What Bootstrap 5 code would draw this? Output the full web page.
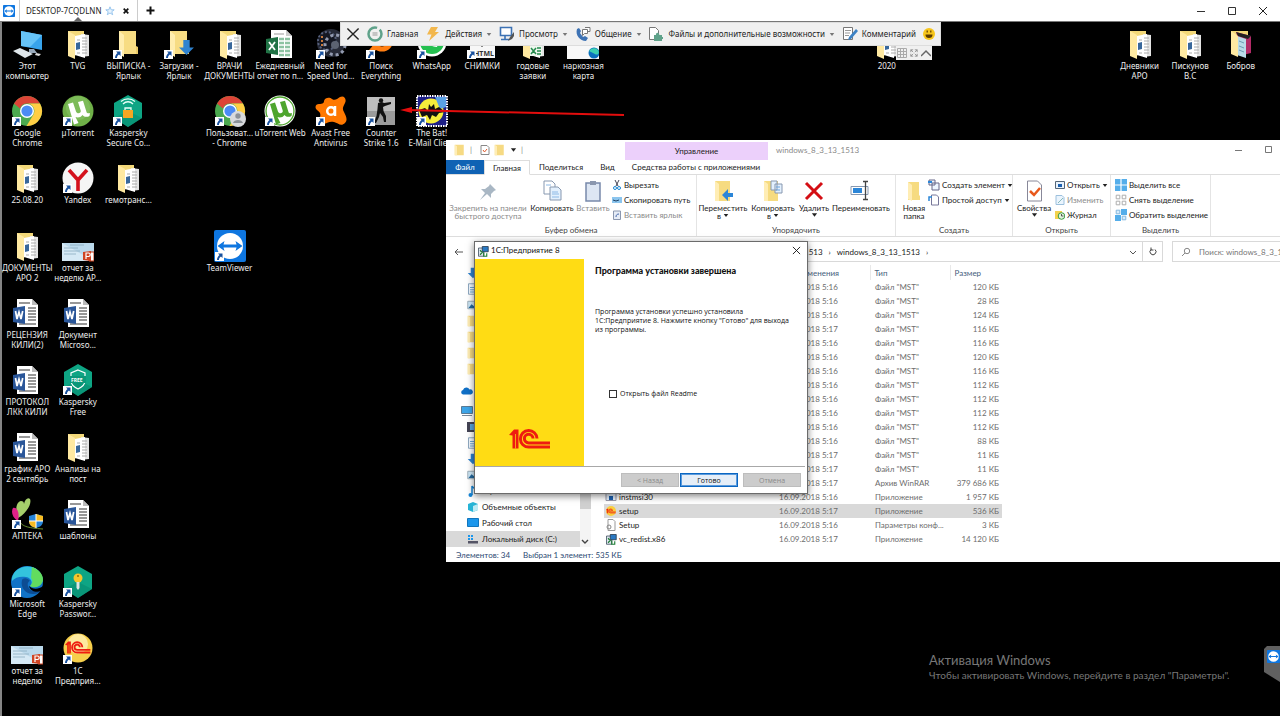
<!DOCTYPE html>
<html lang="ru">
<head>
<meta charset="utf-8">
<meta name="viewport" content="width=device-width, initial-scale=1">
<title>DESKTOP-7CQDLNN</title>
<link rel="stylesheet" href="https://cdn.jsdelivr.net/npm/bootstrap@5.3.0/dist/css/bootstrap.min.css">
<style>
body{font-family:"Noto Sans","Open Sans",sans-serif;font-size:8px;line-height:10px;color:#222;background:#000;overflow:hidden}
button{font:inherit;color:inherit;background:none;border:0;padding:0}
svg{flex:none;display:block}
.i10{width:10px;height:10px}.i12{width:12px;height:12px}.i16{width:16px;height:16px}.i22{width:22px;height:22px}.i32{width:32px;height:32px}
/* session tabs */
.tabs-bar{height:22px;background:#fff;border-bottom:1px solid #777}
.tabs-logo{margin:0 4px 0 3px}
.session-tab{width:119px;border-left:1px solid #ccc;border-right:1px solid #ccc;padding-left:6px}
.tab-pointer{left:73px;top:17px;width:10px;height:5px}
.win-btns{gap:21px;padding-right:12px}
/* desktop */
.desk{background:#000;border-left:2px solid #858585}
.icons{display:grid;grid-template-columns:repeat(25,minmax(0,1fr));grid-template-rows:repeat(10,minmax(0,1fr));padding:0 14px 22px 0}
.ico{display:flex;flex-direction:column;align-items:center;padding-top:6px;color:#eee;text-decoration:none;text-align:center;white-space:nowrap}
.ico span{margin-top:1px}
.c1{grid-column:1}.c2{grid-column:2}.c3{grid-column:3}.c4{grid-column:4}.c5{grid-column:5}.c6{grid-column:6}.c7{grid-column:7}.c8{grid-column:8}.c9{grid-column:9}.c10{grid-column:10}.c11{grid-column:11}.c12{grid-column:12}.c18{grid-column:18}.c23{grid-column:23}.c24{grid-column:24}.c25{grid-column:25}
.r1{grid-row:1}.r2{grid-row:2}.r3{grid-row:3}.r4{grid-row:4}.r5{grid-row:5}.r6{grid-row:6}.r7{grid-row:7}.r8{grid-row:8}.r9{grid-row:9}.r10{grid-row:10}
.tv-bar{left:338px;top:0;height:24px;width:601px;background:#f0f0f0;border:1px solid #ddd;padding:0 5px;white-space:nowrap}
.tv-bar button{display:flex;align-items:center;gap:4px}
.tv-bar .crt{color:#777}
.tv-tail{left:894px;top:24px;height:14px;width:36px;background:#f0f0f0}
.red-arrow{left:396px;top:80px;width:230px;height:18px}
.watermark{left:927px;top:631px;color:#777;font-family:Lato,"Noto Sans",sans-serif;font-size:10px;line-height:15px;white-space:nowrap}
.watermark div{font-size:13px}
.side-grip{right:0;top:624px;width:16px;height:36px}
/* explorer */
.explorer{left:444px;right:0;top:118px;background:#fff;overflow:hidden;white-space:nowrap;font-family:Lato,"Noto Sans",sans-serif}
.ex-title{height:20px}
.quick{width:179px}
.ctx{width:143px;height:18px;background:#ecd0fb;margin-top:2px}
.ex-win-btns{padding-right:6px}
.ex-tabs{height:15px;border-bottom:1px solid #ddd}
.file-tab{width:38px;background:#0f62b4;color:#fff}
.home-tab{width:46px;border:1px solid #ddd;border-bottom-color:#fff;margin-bottom:-1px}
.share-tab{width:62px}.view-tab{width:31px}.tools-tab{width:146px}
.ribbon{height:62px;border-bottom:1px solid #ddd}
.grp{display:flex;flex-direction:column;border-right:1px solid #e4e4e4;padding-top:5px}
.grp-name{height:12px;line-height:12px;text-align:center;color:#444}
.g1{width:251px}.g2{width:199px}.g3{width:117px}.g4{width:98px}.g5{width:100px}
.big{display:flex;flex-direction:column;align-items:center;line-height:8px;flex:none}
.big svg{margin-bottom:2px}
.w84{width:84px}.w44{width:44px}.w38{width:38px}.w48{width:48px}.w34{width:34px}.w60{width:60px}.w28{width:28px}
.smalls{display:flex;flex-direction:column;gap:3px;margin-top:-1px}
.smalls button{display:flex;align-items:center;gap:2px;height:12px}
.dim{color:#8a8a8a!important}
.addr{height:28px;padding:4px 0 3px}
.back{width:10px;margin:0 0 0 8px}
.addr-box{border:1px solid #d9d9d9;width:588px;margin-left:111px}
.crumbs{padding-left:228px}
.crumbs span{margin:0 6px}
.refresh{border-left:1px solid #d9d9d9;width:20px}
.search-box{border:1px solid #d9d9d9;border-right:0;margin-left:9px;padding-left:8px}
.search-box input{border:0;outline:0;font-size:8px;padding:0;background:none;min-width:0}
.search-box input::placeholder{color:#777;opacity:1}
.nav-pane{width:134px}
.nav-pane a{display:flex;align-items:center;gap:3px;height:16px;padding-left:21px;color:#222;text-decoration:none}
.nav-pane a.root{padding-left:15px}
.nav-pane a.od{margin:6px 0 4px}
.nav-pane a.on{background:#d9d9d9}
.pane-scroll{width:11px;background:#f4f4f4}
.pane-scroll i{height:244px;background:#d0d0d0}
.files{margin-left:13px;width:398px;table-layout:fixed;border-collapse:collapse;line-height:14px;color:#6d6d6d}
.files th,.files td{padding:0;overflow:hidden}
.files th{height:15px;font-weight:400;color:#46607d}
.files th+th+th{border-left:1px solid #e8e8e8;padding-left:4px}
.files td+td+td{padding-left:5px}
.files td:last-child{text-align:right;padding-right:3px}
.files td:first-child{color:#222}
.files td:first-child div{display:flex;align-items:center;gap:2px;padding-left:1px}
.files .sel{background:#d9d9d9}
.cn{width:175px}.cd{width:91px}.ct{width:80px}
.ex-status{height:15px;color:#2c4a73;padding-left:10px;gap:13px}
/* installer */
.setup-win{left:472px;top:219px;width:334px;height:253px;background:#fff;border:1px solid #6b6b6b;box-shadow:0 2px 7px rgba(0,0,0,.5);font-family:"Open Sans","Noto Sans",sans-serif;font-size:7px;line-height:9px;color:#111}
.setup-title{height:17px;font-family:Lato,"Noto Sans",sans-serif;font-size:8px;padding:0 6px 0 2px;gap:2px}
.side-art{width:109px;background:#ffdc14;padding-bottom:17px}
.onec-red{color:#ee1c10}
.setup-text{padding-left:11px}
.setup-body{height:208px;border-bottom:1px solid #a8a8a8;margin-right:2px}
.setup-body h1{font-family:Lato,"Noto Sans",sans-serif;font-size:9px;line-height:12px;font-weight:900;margin:6px 0 30px}
.readme{gap:3px;margin-top:55px;padding-left:14px}
.readme input{width:8px;height:8px;margin:0;border:1px solid #333;appearance:none;background:#fff}
.setup-foot{padding-right:6px}
.setup-foot button{width:58px;height:14px;background:#ccc;border:1px solid #bdbdbd;color:#8a8a8a}
.setup-foot .go{background:#e5eef8;border:1px solid #0a66c2;outline:1px solid #5b9bdd;outline-offset:-2px;color:#111;margin:0 5px 0 1px}
</style>
</head>
<body class="vh-100 d-flex flex-column">
<svg width="0" height="0" class="position-absolute">
<defs>
<symbol id="sc" viewBox="0 0 9 9"><path fill="#fff" d="M0 0h9v9H0z"/><path d="M3 1.500h4.500V6L6 4.600C4.600 5.500 4 6.500 4 8H2C2 5.800 3 4.300 4.500 3z" fill="#17509e"/></symbol>
<symbol id="fdoc" viewBox="0 0 32 32"><path d="M6 3h16v8l-9 17H6z" fill="#f3d878"/><path d="M19 6l8 1v21l-8 1z" fill="#e4e4e4"/><path d="M13 8l10-2v24l-10-3z" fill="#fff"/><path d="M20 10h5M20 13h5M20 16h5M20 19h5M20 22h5M20 25h5M15 12h3M15 25h3" stroke="#aaa"/><path d="M14 15l4-1v7l-4 1z" fill="#38679b"/><path d="M6 3l7 4v24l-7-3z" fill="#ffe9a1"/></symbol>
<symbol id="fold" viewBox="0 0 32 32"><path d="M7 3h17v15l2 1v7H12L7 27z" fill="#eccb67"/><path d="M7 3h17v23H7z" fill="#f7dc83"/><path d="M7 3l5 4v22l-5-3z" fill="#ffedae"/></symbol>
<symbol id="word" viewBox="0 0 32 32"><path d="M6 2h15l6 6v22H6z" fill="#fff"/><path d="M21 2v6h6z" fill="#bbb"/><path d="M8 6h11M17 11h8M17 14h8M17 17h8M17 20h8M17 23h8M8 27h17" stroke="#777" stroke-width="1.300"/><path d="M2 11l12-2v18L2 25z" fill="#2a5699"/><path d="M4.500 14l1.500 8 2-7 2 7 1.700-8" stroke="#fff" stroke-width="1.700" fill="none"/></symbol>
<symbol id="xls" viewBox="0 0 32 32"><path d="M7 2h15l6 6v22H7z" fill="#fff"/><path d="M22 2v6h6z" fill="#ccc"/><path d="M15 11h11M15 15h11M15 19h11M15 23h11M15 27h11" stroke="#8cc3a2" stroke-width="2.400" stroke-dasharray="5 1"/><path d="M10 6h10" stroke="#999"/><path d="M2 11l12-2v18L2 25z" fill="#217346"/><path d="M5 14l6 8M11 14l-6 8" stroke="#fff" stroke-width="1.800"/></symbol>
<symbol id="chr" viewBox="0 0 32 32"><circle cx="16" cy="16" r="15" fill="#4ba94f"/><path d="M3 8.500A15 15 0 0 1 29 8.500H16a7.500 7.500 0 0 0-7 5z" fill="#dc4437"/><path d="M29 8.500A15 15 0 0 1 15.500 31l7-11.500A7.500 7.500 0 0 0 16 8.500z" fill="#ffce44"/><circle cx="16" cy="16" r="7" fill="#fff"/><circle cx="16" cy="16" r="5.600" fill="#4b8bf4"/></symbol>
<symbol id="mu" viewBox="0 0 32 32"><path d="M6 9l5-1.500 3 9c1 3 5.500 2 4.700-1L16 7l5-1.200L24.500 17c.6 1.600 2 1.600 3.500 1l-.5 3c-2.500 1.500-5.500 1-7-1-1.500 2.500-5 3-7 2l3 6-4.500 1.500z" fill="currentColor"/></symbol>
<symbol id="hex" viewBox="0 0 32 32"><path d="M16 0l14 8v15l-14 9-14-9V8z" fill="#0ea584"/><path d="M16 16l14 7-14 9-14-9z" fill="#078c70" opacity=".6"/></symbol>
<symbol id="ppt" viewBox="0 0 32 32"><path d="M0 13h32v18H0z" fill="#d5e9f5"/><path d="M0 13h32v18" fill="#a8cfe6" opacity=".6"/><path d="M2 18h14M2 21h16M2 24h12M8 15h14" stroke="#8babbf" stroke-width=".8"/><path d="M27 22h5v9h-5z" fill="#fff" stroke="#c43e1c"/><path d="M21 22l8-1v10l-8-1z" fill="#d04423"/><path d="M24 29v-6h2.500a1.500 1.500 0 0 1 0 3.500H24" stroke="#fff" stroke-width="1.200" fill="none"/></symbol>
<symbol id="tv" viewBox="0 0 32 32"><rect width="32" height="32" rx="2" fill="#0e76e0"/><circle cx="16" cy="16" r="13" fill="#fff"/><path d="M3.500 16l7-5-1 3.500h13l-1-3.500 7 5-7 5 1-3.500h-13l1 3.500z" fill="#0e76e0"/></symbol>
<symbol id="onec" viewBox="0 0 42 20"><path d="M0 6l5-5.500h4.500V19.500h-6V6.500z" fill="currentColor"/><path d="M6.500 5v14.500" stroke="#ffdc14" stroke-width=".7"/><path d="M28 9.500a8.300 8.300 0 1 0-8.300 8.600H41M24 9.500a4.300 4.300 0 1 0-4.300 4.400H41" fill="none" stroke="currentColor" stroke-width="3"/></symbol>
<symbol id="msi" viewBox="0 0 16 16"><path d="M2 4h7v11H2z" fill="#dfe5ee" stroke="#345"/><path d="M7 2h8v7H7z" fill="#2b79c2" stroke="#234"/><path d="M4 7l3 3-3 3M9 10v5h4v-4" fill="none" stroke="#1b7c34" stroke-width="1.500"/></symbol>
<symbol id="car" viewBox="0 0 8 6"><path d="M1 1h6L4 5z" fill="currentColor"/></symbol>
<symbol id="dl" viewBox="0 0 16 16"><path d="M5 1h6v7h4l-7 7-7-7h4z" fill="#2f83d0"/></symbol>
<symbol id="pg" viewBox="0 0 16 16"><path d="M2 1h9l3 3v11H2z" fill="#f4f9ff" stroke="#6c8fae"/><path d="M4 6h8M4 9h8M4 12h8" stroke="#3f8ec6"/></symbol>
<symbol id="pic" viewBox="0 0 16 16"><path d="M1 3h14v10H1z" fill="#cfe8f8" stroke="#8899a6"/><path d="M2 12l4-5 4 3 4-2v4z" fill="#24699e"/></symbol>
<symbol id="nf" viewBox="0 0 16 16"><path d="M1 1h12v14H1z" fill="#f6da83"/><path d="M1 1l3 2v12H1z" fill="#ffedb4"/></symbol>
<symbol id="xx" viewBox="0 0 10 10"><path d="M1 1l8 8M9 1L1 9" stroke="currentColor" fill="none"/></symbol>
<symbol id="shd" viewBox="0 0 14 14"><path d="M7 0l7 2v5c0 4-3 6-7 7-4-1-7-3-7-7V2z" fill="#2684d8"/><path d="M7 0l7 2v5H7zM0 7h7v7C3 13 0 11 0 7z" fill="#f7bd24"/><path d="M7 0v14M0 7h14" stroke="#fff"/></symbol>
</defs>
</svg>

<header class="tabs-bar d-flex align-items-center position-relative flex-shrink-0">
<svg class="i12 tabs-logo"><use href="#tv"/></svg>
<div class="session-tab d-flex align-items-center h-100"><span>DESKTOP-7CQDLNN</span>
<svg class="i10 ms-auto" viewBox="0 0 10 10"><path d="M5 .8l1.200 3h3L6.800 5.700l.9 3L5 7 2.300 8.700l.9-3L.8 3.800h3z" fill="#e8f3fd" stroke="#77b3e8" stroke-width=".7"/></svg>
<button class="mx-2" aria-label="Закрыть"><svg width="6" height="6" viewBox="0 0 6 6"><path d="M.7.7l4.600 4.600M5.300.7L.7 5.300" stroke="#111" stroke-width="1.700"/></svg></button></div>
<button class="ms-2" aria-label="Добавить"><svg width="9" height="9" viewBox="0 0 9 9"><path d="M4.500.5v8M.5 4.500h8" stroke="#111" stroke-width="2"/></svg></button>
<svg class="tab-pointer position-absolute" viewBox="0 0 10 5"><path d="M5 0l5 5H0z" fill="#666"/></svg>
<div class="win-btns d-flex ms-auto align-items-center">
<button aria-label="Свернуть"><svg class="i10" viewBox="0 0 10 10"><path d="M1 5.500h8" stroke="#333"/></svg></button>
<button aria-label="Развернуть"><svg class="i10" viewBox="0 0 10 10"><path d="M1.500 1.500h7v7h-7z" stroke="#333" fill="none"/></svg></button>
<button aria-label="Закрыть окно"><svg width="10" height="10"><use href="#xx"/></svg></button>
</div>
</header>

<main class="desk flex-grow-1 position-relative overflow-hidden">
<nav class="icons h-100" aria-label="Рабочий стол">
<a href="#" class="ico c1 r1"><svg class="i32" viewBox="0 0 32 32"><path d="M10 3l21 4v15l-21-4z" fill="#38a4ec"/><path d="M10 3l21 4-12 12-9-1z" fill="#66c3f7"/><path d="M18 21h5l3 4h-8z" fill="#9ab"/><path d="M2 23l7-3 13 6-8 4z" fill="#dfe6ea"/><path d="M25 25l5 1-2 2-4-1z" fill="#ddd"/></svg><span>Этот<br>компьютер</span></a>
<a href="#" class="ico c2 r1"><svg class="i32"><use href="#fdoc"/></svg><span>TVG</span></a>
<a href="#" class="ico c3 r1"><svg class="i32"><use href="#fold"/><use href="#sc" x="1" y="22" width="9" height="9"/></svg><span>ВЫПИСКА -<br>Ярлык</span></a>
<a href="#" class="ico c4 r1"><svg class="i32"><use href="#fold"/><use href="#dl" x="15" y="11" width="17" height="17"/><use href="#sc" x="1" y="22" width="9" height="9"/></svg><span>Загрузки -<br>Ярлык</span></a>
<a href="#" class="ico c5 r1"><svg class="i32"><use href="#fdoc"/></svg><span>ВРАЧИ<br>ДОКУМЕНТЫ</span></a>
<a href="#" class="ico c6 r1"><svg class="i32"><use href="#xls"/></svg><span>Ежедневный<br>отчет по п...</span></a>
<a href="#" class="ico c7 r1"><svg class="i32" viewBox="0 0 32 32"><circle cx="16" cy="15" r="14" fill="#272b38"/><circle cx="12" cy="13" r="9" fill="#151823" stroke="#56607b" stroke-width="2" stroke-dasharray="2 2"/><circle cx="20" cy="17" r="10" fill="none" stroke="#939bb0" stroke-width="3" stroke-dasharray="3 3"/><circle cx="20" cy="17" r="4" fill="#5c6372"/><path d="M7 8v12" stroke="#c97a3b" stroke-width="2" stroke-dasharray="2 2"/><use href="#sc" x="1" y="22" width="9" height="9"/></svg><span>Need for<br>Speed Und...</span></a>
<a href="#" class="ico c8 r1"><svg class="i32" viewBox="0 0 32 32"><circle cx="17" cy="12" r="9" fill="none" stroke="#ff7e12" stroke-width="5"/><path d="M11 18l-7 8" stroke="#ff7e12" stroke-width="5"/><use href="#sc" x="1" y="22" width="9" height="9"/></svg><span>Поиск<br>Everything</span></a>
<a href="#" class="ico c9 r1"><svg class="i32" viewBox="0 0 32 32"><circle cx="16" cy="14" r="14.500" fill="#fff"/><circle cx="16" cy="14" r="12" fill="#25c050"/><path d="M10 9c1 6 5 10 11 10l1-3-4-2-2 2-4-4z" fill="#fff"/><use href="#sc" x="1" y="22" width="9" height="9"/></svg><span>WhatsApp</span></a>
<a href="#" class="ico c10 r1"><svg class="i32" viewBox="0 0 32 32"><path d="M4 1h25v29H4z" fill="#f7f7f7"/><path d="M11 14l5 5 5-5" fill="none" stroke="#888"/><text x="8" y="28" font-size="7" font-weight="700" fill="#333">HTML</text><use href="#sc" x="1" y="22" width="9" height="9"/></svg><span>СНИМКИ</span></a>
<a href="#" class="ico c11 r1"><svg class="i32" viewBox="0 0 32 32"><use href="#fdoc"/><path d="M13 18h12v10H13z" fill="#eef7ee"/><path d="M14 20l5 6M19 20l-5 6M20 20h4M20 23h4M20 26h4" stroke="#258b4d" stroke-width="1.500"/></svg><span>годовые<br>заявки</span></a>
<a href="#" class="ico c12 r1"><svg class="i32" viewBox="0 0 32 32"><path d="M0 12h32v19H0z" fill="#f8f8f8"/><circle cx="27" cy="25" r="5.500" fill="#0c71bd"/><path d="M22 23a5.500 5.500 0 0 1 10 1c0 3-3 3-4 2z" fill="#3bd0b0"/></svg><span>наркозная<br>карта</span></a>
<a href="#" class="ico c18 r1"><svg class="i32"><use href="#fdoc"/></svg><span>2020</span></a>
<a href="#" class="ico c23 r1"><svg class="i32"><use href="#fdoc"/></svg><span>Дневники<br>АРО</span></a>
<a href="#" class="ico c24 r1"><svg class="i32"><use href="#fdoc"/></svg><span>Пискунов<br>В.С</span></a>
<a href="#" class="ico c25 r1"><svg class="i32" viewBox="0 0 32 32"><path d="M6 3h17v12H6z" fill="#f3d878"/><path d="M11 4l15 4v17l-8 2z" fill="#b32b68"/><path d="M11 4l15 4-3 3-10-3z" fill="#222"/><path d="M12 8l9 3v19l-9-3z" fill="#b9dbe9"/><path d="M14 13l5 2M14 18l5 2M14 22l5 2" stroke="#6e9cb4"/><path d="M6 3l7 5v21l-7-3z" fill="#ffe9a1"/></svg><span>Бобров</span></a>

<a href="#" class="ico c1 r2"><svg class="i32"><use href="#chr"/><use href="#sc" x="1" y="22" width="9" height="9"/></svg><span>Google<br>Chrome</span></a>
<a href="#" class="ico c2 r2"><svg class="i32 text-white"><circle cx="16" cy="16" r="15.500" fill="#6fb048"/><circle cx="16" cy="13" r="12" fill="#8bc66a" opacity=".5"/><use href="#mu"/><use href="#sc" x="1" y="22" width="9" height="9"/></svg><span>µTorrent</span></a>
<a href="#" class="ico c3 r2"><svg class="i32" viewBox="0 0 32 32"><use href="#hex"/><path d="M11 15h10v8H11z" fill="#f5a623"/><path d="M13 15v-2h6v2M11 9c3-3 7-3 10 0M9 6.500c4-3.500 10-3.500 14 0" fill="none" stroke="#e6fff7" stroke-width="1.300"/><use href="#sc" x="1" y="22" width="9" height="9"/></svg><span>Kaspersky<br>Secure Co...</span></a>
<a href="#" class="ico c5 r2"><svg class="i32"><use href="#chr"/><circle cx="24" cy="24" r="8" fill="#d8dadd"/><circle cx="24" cy="21" r="2.700" fill="#8c9298"/><path d="M19 28c1-4 9-4 10 0z" fill="#8c9298"/><use href="#sc" x="1" y="22" width="9" height="9"/></svg><span>Пользоват...<br>- Chrome</span></a>
<a href="#" class="ico c6 r2"><svg class="i32 text-success"><circle cx="16" cy="16" r="15.500" fill="#fff"/><circle cx="16" cy="16" r="14" fill="none" stroke="#4ea52e" stroke-width="1.300"/><g color="#4ea52e"><use href="#mu"/></g><use href="#sc" x="1" y="22" width="9" height="9"/></svg><span>uTorrent Web</span></a>
<a href="#" class="ico c7 r2"><svg class="i32" viewBox="0 0 32 32"><path d="M9 6c1-4 6-4 8-2 3 2 5 0 8-2 4-2 7 2 5 6s-3 6-1 9c2 4 4 8 1 11-4 4-7 0-11-1-5-1-6 1-10 2-5 1-6-3-4-7 1-3 0-5-3-7-3-3-1-6 2-6 4 0 5-1 5-3z" fill="#ff7800"/><circle cx="16" cy="16" r="3.800" fill="none" stroke="#fff" stroke-width="2.500"/><path d="M20 11v10" stroke="#fff" stroke-width="2.500"/><use href="#sc" x="1" y="22" width="9" height="9"/></svg><span>Avast Free<br>Antivirus</span></a>
<a href="#" class="ico c8 r2"><svg class="i32" viewBox="0 0 32 32"><path d="M2 2h28v28H2z" fill="#9b9b9b"/><path d="M2 2h28v14H2z" fill="#bdbdbd"/><circle cx="16" cy="5.500" r="2.200" fill="#111"/><path d="M13 8l4-1 2 1 7-1v2l-6 2-2 1 .5 4 2.500 5v6h-2l-1-5-3-4-1 4-3 6h-2l2.500-7 1-7z" fill="#111"/><use href="#sc" x="1" y="22" width="9" height="9"/></svg><span>Counter<br>Strike 1.6</span></a>
<a href="#" class="ico c9 r2"><svg class="i32" viewBox="0 0 32 32"><path d="M1 1h30v30H1z" fill="#1d1f86" stroke="#fff" stroke-width="2" stroke-dasharray="1.500 1"/><circle cx="15" cy="16" r="12.500" fill="#f6ee3b"/><path d="M19 2h11v10l-6 2z" fill="#5aa2e5"/><path d="M3 15l6-2 3 3 1-7 2 3 3-3 1 5 4-2 6 5-6 1-3 4-4-2-2 5-3-5-5 2z" fill="#111"/><use href="#sc" x="1" y="22" width="9" height="9"/></svg><span>The Bat!<br>E-Mail Client</span></a>

<a href="#" class="ico c1 r3"><svg class="i32"><use href="#fdoc"/></svg><span>25.08.20</span></a>
<a href="#" class="ico c2 r3"><svg class="i32" viewBox="0 0 32 32"><circle cx="16" cy="16" r="15.500" fill="#f5f5f5"/><path d="M7 8l9 10 9-10M16 18v11" stroke="#d4111c" stroke-width="3.600" fill="none"/><use href="#sc" x="1" y="22" width="9" height="9"/></svg><span>Yandex</span></a>
<a href="#" class="ico c3 r3"><svg class="i32"><use href="#fdoc"/></svg><span>гемотранс...</span></a>

<a href="#" class="ico c1 r4"><svg class="i32"><use href="#fdoc"/></svg><span>ДОКУМЕНТЫ<br>АРО 2</span></a>
<a href="#" class="ico c2 r4"><svg class="i32"><use href="#ppt"/></svg><span>отчет за<br>неделю АР...</span></a>
<a href="#" class="ico c5 r4"><svg class="i32"><use href="#tv"/><use href="#sc" x="1" y="22" width="9" height="9"/></svg><span>TeamViewer</span></a>
<a href="#" class="ico c1 r5"><svg class="i32"><use href="#word"/></svg><span>РЕЦЕНЗИЯ<br>КИЛИ(2)</span></a>
<a href="#" class="ico c2 r5"><svg class="i32"><use href="#word"/></svg><span>Документ<br>Microso...</span></a>
<a href="#" class="ico c1 r6"><svg class="i32"><use href="#word"/></svg><span>ПРОТОКОЛ<br>ЛКК КИЛИ</span></a>
<a href="#" class="ico c2 r6"><svg class="i32" viewBox="0 0 32 32"><use href="#hex"/><path d="M16 6l7 3v8c0 4-3 6-7 8-4-2-7-4-7-8V9z" fill="none" stroke="#fff" stroke-width="1.200"/><path d="M8 12h16v7H8z" fill="#0a987a"/><text x="9" y="18" font-size="5" font-weight="700" fill="#fff">FREE</text><use href="#sc" x="1" y="22" width="9" height="9"/></svg><span>Kaspersky<br>Free</span></a>
<a href="#" class="ico c1 r7"><svg class="i32"><use href="#word"/></svg><span>график АРО<br>2 сентябрь</span></a>
<a href="#" class="ico c2 r7"><svg class="i32"><use href="#fdoc"/></svg><span>Анализы на<br>пост</span></a>
<a href="#" class="ico c1 r8"><svg class="i32" viewBox="0 0 32 32"><path d="M7 20C4 12 5 4 10 3c2 0 3 1 3 3 1-5 4-7 6-5 2 4-3 14-12 19z" fill="#a5cf6b"/><path d="M7 23C1 20 0 13 2 10c4-1 7 4 5 13z" fill="#e0218a"/><path d="M8 22c2 6 8 8 24 9" stroke="#6a8f2d" fill="none"/><use href="#shd" x="18" y="16" width="14" height="14"/><use href="#sc" x="1" y="22" width="9" height="9"/></svg><span>АПТЕКА</span></a>
<a href="#" class="ico c2 r8"><svg class="i32"><use href="#word"/></svg><span>шаблоны</span></a>
<a href="#" class="ico c1 r9"><svg class="i32" viewBox="0 0 32 32"><circle cx="16" cy="16" r="16" fill="#1173c7"/><path d="M1 12C4-2 26-4 31 10c3 9-6 13-12 10 3-2 2-8-4-9-5-1-11 0-14 4z" fill="#33c3dd"/><path d="M21 1c9 3 13 11 10 16-3 5-9 5-12 3 3-3 3-6 1-8z" fill="#62dc5f"/><path d="M11 14c-2 8 4 14 11 14 4 0 6-1 8-4-5 3-12 1-13-4-1-3 1-5 2-5-3-4-7-3-8-1z" fill="#0c4c93"/><path d="M18 20c3 3 9 4 14 0l-2 5c-5 2-11 0-12-5z" fill="#000"/><use href="#sc" x="1" y="22" width="9" height="9"/></svg><span>Microsoft<br>Edge</span></a>
<a href="#" class="ico c2 r9"><svg class="i32" viewBox="0 0 32 32"><use href="#hex"/><circle cx="16" cy="12" r="4.500" fill="#f6c62c"/><path d="M14.500 16h3v6l-1.500 2-1.500-2z" fill="#dce5e4"/><circle cx="16" cy="10" r="1" fill="#946c00"/><use href="#sc" x="1" y="22" width="9" height="9"/></svg><span>Kaspersky<br>Passwor...</span></a>
<a href="#" class="ico c1 r10"><svg class="i32"><use href="#ppt"/></svg><span>отчет за<br>неделю</span></a>
<a href="#" class="ico c2 r10"><svg class="i32 onec-red" viewBox="0 0 32 32"><circle cx="16" cy="15" r="14.500" fill="#f6cf4b"/><circle cx="16" cy="11" r="10" fill="#fff0b4" opacity=".8"/><use href="#onec" x="3" y="8" width="26" height="13"/><use href="#sc" x="1" y="22" width="9" height="9"/></svg><span>1С<br>Предприя...</span></a>
</nav>

<section class="explorer position-absolute">
<div class="ex-title d-flex">
<div class="quick d-flex align-items-center gap-1 ps-1"><svg class="i12 ms-1"><use href="#nf"/></svg><span class="dim">|</span><svg class="i10 ms-1" viewBox="0 0 10 10"><path d="M1 .5h6l2 2v7H1z" fill="#fff" stroke="#888"/><path d="M3 5l1.500 2L7 4" stroke="#e05a2b" fill="none"/></svg><svg class="i12"><use href="#nf"/></svg><svg width="7" height="6"><use href="#car"/></svg><span class="dim">|</span></div>
<div class="ctx d-flex align-items-center justify-content-center">Управление</div>
<span class="dim ms-2 align-self-center">windows_8_3_13_1513</span>
<div class="ex-win-btns ms-auto d-flex align-items-center dim"><button aria-label="Свернуть"><svg class="i10" viewBox="0 0 10 10"><path d="M1 5.500h7" stroke="#777"/></svg></button><button class="ms-3" aria-label="Развернуть"><svg class="i10 ms-1" viewBox="0 0 10 10"><path d="M1.500 1.500h6v6h-6z" stroke="#777" fill="none"/></svg></button></div>
</div>
<div class="ex-tabs d-flex align-items-stretch">
<button class="file-tab">Файл</button><button class="home-tab">Главная</button><button class="share-tab">Поделиться</button><button class="view-tab">Вид</button><button class="tools-tab">Средства работы с приложениями</button>
</div>
<div class="ribbon d-flex">
<div class="grp g1"><div class="d-flex flex-grow-1">
<button class="big w84 dim"><svg class="i22" viewBox="0 0 22 22"><path d="M13 4l6 6-2 1-3 3v4l-4-4-7 6 5-7-4-4h4l4-3z" fill="#a9b7c4"/></svg><span>Закрепить на панели<br>быстрого доступа</span></button>
<button class="big w44"><svg class="i22" viewBox="0 0 22 22"><path d="M3 1h8l3 3v10H3z" fill="#fff" stroke="#8798b0"/><path d="M9 7h8l3 3v10H9z" fill="#e3f0fd" stroke="#8798b0"/><path d="M11 12h6M11 14h7M11 17h7M5 5h5" stroke="#8cb9e6"/></svg>Копировать</button>
<button class="big w38 dim"><svg class="i22" viewBox="0 0 22 22"><path d="M4 3h14v18H4z" fill="#dde6f3" stroke="#7889ab" stroke-width="1.500"/><path d="M8 1h6v4H8z" fill="#8b97ae"/></svg>Вставить</button>
<div class="smalls"><button><svg class="i10" viewBox="0 0 10 10"><path d="M3 0l3 6M7 0L4 6" stroke="#445"/><circle cx="3" cy="8" r="1.500" fill="none" stroke="#1b85d2"/><circle cx="7" cy="8" r="1.500" fill="none" stroke="#1b85d2"/></svg>Вырезать</button><button><svg class="i10" viewBox="0 0 10 10"><path d="M0 2h10v6H0z" fill="#8cc5ee"/><path d="M1 5l3 1 3-1" stroke="#246" fill="none"/></svg>Скопировать путь</button><button class="dim"><svg class="i10" viewBox="0 0 10 10"><path d="M1.500 1h7v8.500h-7z" fill="#e6ecf6" stroke="#8b97ae"/><path d="M4 7c0-2 1-3 3-3" stroke="#46a" fill="none"/></svg>Вставить ярлык</button></div>
</div><div class="grp-name">Буфер обмена</div></div>
<div class="grp g2"><div class="d-flex flex-grow-1 ps-1">
<button class="big w44"><svg class="i22" viewBox="0 0 22 22"><path d="M3 1h15v20H3z" fill="#f6db80"/><path d="M3 1l4 3v17H3z" fill="#ffedb4"/><path d="M21 13h-5v-4l-6 6 6 6v-4h5z" fill="#2b86d8"/></svg>Переместить<span>в <svg class="d-inline" width="6" height="5"><use href="#car"/></svg></span></button>
<button class="big w48 ms-1"><svg class="i22" viewBox="0 0 22 22"><path d="M2 1h14v20H2z" fill="#f6db80"/><path d="M2 1l4 3v17H2z" fill="#ffedb4"/><path d="M9 1h6v9H9zM13 4h7v9h-7z" fill="#e3f0fd" stroke="#8798b0"/><path d="M14 7h4M14 10h4" stroke="#6aa4dd"/></svg>Копировать<span>в <svg class="d-inline" width="6" height="5"><use href="#car"/></svg></span></button>
<button class="big w34"><svg class="i22" viewBox="0 0 22 22"><path d="M3 3l16 16M19 3L3 19" stroke="#d40e14" stroke-width="3"/></svg>Удалить<svg width="7" height="6"><use href="#car"/></svg></button>
<button class="big w60"><svg class="i22" viewBox="0 0 22 22"><path d="M1 6.500h17v8H1z" fill="#fff" stroke="#8798b0"/><path d="M3 8h9v5H3z" fill="#2b86d8"/><path d="M15.500 2v17M13 1.500h5M13 19.500h5" stroke="#444" stroke-width="1.300"/></svg>Переименовать</button>
</div><div class="grp-name">Упорядочить</div></div>
<div class="grp g3"><div class="d-flex flex-grow-1 ps-1">
<button class="big w28"><svg class="i22" viewBox="0 0 22 22"><path d="M5 2h11v13l1 1v4H5z" fill="#f6db80"/><path d="M5 2l4 3v16l-4-2z" fill="#ffedb4"/></svg>Новая<br>папка</button>
<div class="smalls"><button><svg class="i12" viewBox="0 0 12 12"><path d="M1 1h6v5H1zM4 4h7v7H4z" fill="#eef6ff" stroke="#668"/><path d="M0 3h4" stroke="#2b86d8" stroke-width="2"/></svg>Создать элемент<svg width="6" height="5"><use href="#car"/></svg></button><button><svg class="i12" viewBox="0 0 12 12"><path d="M3.500 1h5l2 2v8h-7z" fill="#fff" stroke="#779"/><path d="M1 7V3h3" stroke="#2b86d8" stroke-width="1.500" fill="none"/></svg>Простой доступ<svg width="6" height="5"><use href="#car"/></svg></button></div>
</div><div class="grp-name">Создать</div></div>
<div class="grp g4"><div class="d-flex flex-grow-1 ps-1">
<button class="big w34"><svg class="i22" viewBox="0 0 22 22"><path d="M4.500 1h10l4 4v16h-14z" fill="#fff" stroke="#889"/><path d="M7 11l4 4 6-7" stroke="#e8591c" stroke-width="2.500" fill="none"/></svg>Свойства<svg width="7" height="6"><use href="#car"/></svg></button>
<div class="smalls ms-1"><button><svg class="i10" viewBox="0 0 10 10"><path d="M.5 1.500h9v7h-9z" fill="#e8f2fc" stroke="#567"/><path d="M3 4h4v3H3z" fill="#1d61b0"/></svg>Открыть<svg width="6" height="5"><use href="#car"/></svg></button><button class="dim"><svg class="i10" viewBox="0 0 10 10"><path d="M1 .5h6l2 2v7H1z" fill="#eaf4fd" stroke="#9cc0dd"/><path d="M3 8l5-5" stroke="#8bb"/></svg>Изменить</button><button><svg class="i10" viewBox="0 0 10 10"><path d="M0 1h7v8H0z" fill="#f4d24e"/><circle cx="6.500" cy="6" r="3.300" fill="#dff3df" stroke="#3a9a42"/><path d="M6.500 4v2h2" stroke="#333" fill="none" stroke-width=".8"/></svg>Журнал</button></div>
</div><div class="grp-name">Открыть</div></div>
<div class="grp g5"><div class="d-flex flex-grow-1 ps-1">
<div class="smalls"><button><svg class="i12" viewBox="0 0 10 10"><path d="M0 0h4.500v4.500H0zM5.500 0H10v4.500H5.500zM0 5.500h4.500V10H0zM5.500 5.500H10V10H5.500z" fill="#55aeea"/></svg>Выделить все</button><button><svg class="i12" viewBox="0 0 10 10"><path d="M1 1h3v3H1zM6 1h3v3H6zM1 6h3v3H1zM6 6h3v3H6z" fill="#fff" stroke="#aaa" stroke-width=".8"/></svg>Снять выделение</button><button><svg class="i12" viewBox="0 0 10 10"><path d="M5 0h5v5H5zM0 5h5v5H0z" fill="#55aeea"/><path d="M1 1h3v3H1zM6 6h3v3H6z" fill="#d7ecfb" stroke="#7fb5dd" stroke-width=".8"/></svg>Обратить выделение</button></div>
</div><div class="grp-name">Выделить</div></div>
</div>
<div class="addr d-flex">
<button class="back" aria-label="Назад"><svg class="i10" viewBox="0 0 10 10"><path d="M9 5H1M4 2L1 5l3 3" stroke="#555" fill="none"/></svg></button>
<div class="addr-box d-flex align-items-center flex-shrink-0">
<div class="crumbs me-auto">1513<span>›</span>windows_8_3_13_1513<span>›</span></div>
<svg class="i10 me-1" viewBox="0 0 10 10"><path d="M2 4l3 3 3-3" stroke="#555" fill="none"/></svg>
<button class="refresh h-100 d-flex align-items-center justify-content-center" aria-label="Обновить"><svg class="i10" viewBox="0 0 10 10"><path d="M7 2.500A3 3 0 1 1 3 2.500M3 .5v2.500h2.500" stroke="#444" fill="none"/></svg></button>
</div>
<label class="search-box d-flex align-items-center flex-grow-1"><svg class="i10 me-2" viewBox="0 0 10 10"><circle cx="6" cy="4" r="2.700" stroke="#888" fill="none"/><path d="M4 6L1 9" stroke="#888"/></svg><input type="text" placeholder="Поиск: windows_8_3_13_1513" aria-label="Поиск"></label>
</div>
<div class="d-flex">
<nav class="nav-pane">
<a href="#" aria-label="Загрузки"><svg class="i12"><use href="#dl"/></svg></a>
<a href="#" aria-label="Документы"><svg class="i12"><use href="#pg"/></svg></a>
<a href="#" aria-label="Изображения"><svg class="i12"><use href="#pic"/></svg></a>
<a href="#" aria-label="Папка 1"><svg class="i12"><use href="#nf"/></svg></a>
<a href="#" aria-label="Папка 2"><svg class="i12"><use href="#nf"/></svg></a>
<a href="#" aria-label="Папка 3"><svg class="i12"><use href="#nf"/></svg></a>
<a href="#" aria-label="Папка 4"><svg class="i12"><use href="#nf"/></svg></a>
<a href="#" class="root od" aria-label="OneDrive"><svg class="i12" viewBox="0 0 12 12"><path d="M2 9.500a2.300 2.300 0 0 1 0-4.500 3.500 3.500 0 0 1 6.500-.5A2.600 2.600 0 0 1 10 9.500z" fill="#0f6fc6"/></svg></a>
<a href="#" class="root pc" aria-label="Этот компьютер"><svg class="i12" viewBox="0 0 12 12"><path d="M.5 1.500h11v7H.5z" fill="#3da5e8" stroke="#5a7a94"/><path d="M1 10.500h10" stroke="#789"/></svg></a>
<a href="#" aria-label="Видео"><svg class="i12" viewBox="0 0 12 12"><path d="M0 1h12v10H0z" fill="#445"/><path d="M3 3h6v6H3z" fill="#58a6df"/></svg></a>
<a href="#" aria-label="Документы"><svg class="i12"><use href="#pg"/></svg></a>
<a href="#" aria-label="Загрузки"><svg class="i12"><use href="#dl"/></svg></a>
<a href="#" aria-label="Изображения"><svg class="i12"><use href="#pic"/></svg></a>
<a href="#"><svg class="i12" viewBox="0 0 12 12"><path d="M5 10V1c1 2 4 2 3 5" stroke="#1687d9" fill="none" stroke-width="1.500"/><circle cx="3.500" cy="10" r="2" fill="#1687d9"/></svg>Музыка</a>
<a href="#"><svg class="i12" viewBox="0 0 12 12"><path d="M1 3l5-2 5 2v6l-5 2-5-2z" fill="#27b4d6"/><path d="M6 5l5-2v6l-5 2z" fill="#bdeaf4"/></svg>Объемные объекты</a>
<a href="#"><svg class="i12" viewBox="0 0 12 12"><path d="M.5 1.500h11v8H.5z" fill="#1c97ec" stroke="#1276bd"/></svg>Рабочий стол</a>
<a href="#" class="on"><svg class="i12" viewBox="0 0 12 12"><path d="M1 8h10v2.500H1z" fill="#556"/><path d="M1 2h2v2H1zM4 2h2v2H4zM1 5h2v2H1zM4 5h2v2H4z" fill="#1c97ec"/></svg>Локальный диск (C:)</a>
</nav>
<div class="pane-scroll d-flex flex-column justify-content-between"><i></i><svg class="i10" viewBox="0 0 10 10"><path d="M2 3l3 3 3-3" stroke="#444" fill="none" stroke-width="1.400"/></svg></div>
<table class="files align-self-start">
<colgroup><col class="cn"><col class="cd"><col class="ct"><col></colgroup>
<thead><tr><th></th><th>Дата изменения</th><th>Тип</th><th>Размер</th></tr></thead>
<tbody>
<tr><td></td><td>16.09.2018 5:16</td><td>Файл "MST"</td><td>120 КБ</td></tr>
<tr><td></td><td>16.09.2018 5:16</td><td>Файл "MST"</td><td>28 КБ</td></tr>
<tr><td></td><td>16.09.2018 5:16</td><td>Файл "MST"</td><td>124 КБ</td></tr>
<tr><td></td><td>16.09.2018 5:17</td><td>Файл "MST"</td><td>116 КБ</td></tr>
<tr><td></td><td>16.09.2018 5:16</td><td>Файл "MST"</td><td>116 КБ</td></tr>
<tr><td></td><td>16.09.2018 5:16</td><td>Файл "MST"</td><td>120 КБ</td></tr>
<tr><td></td><td>16.09.2018 5:16</td><td>Файл "MST"</td><td>116 КБ</td></tr>
<tr><td></td><td>16.09.2018 5:16</td><td>Файл "MST"</td><td>112 КБ</td></tr>
<tr><td></td><td>16.09.2018 5:16</td><td>Файл "MST"</td><td>112 КБ</td></tr>
<tr><td></td><td>16.09.2018 5:16</td><td>Файл "MST"</td><td>112 КБ</td></tr>
<tr><td></td><td>16.09.2018 5:16</td><td>Файл "MST"</td><td>112 КБ</td></tr>
<tr><td></td><td>16.09.2018 5:16</td><td>Файл "MST"</td><td>88 КБ</td></tr>
<tr><td></td><td>16.09.2018 5:17</td><td>Файл "MST"</td><td>11 КБ</td></tr>
<tr><td></td><td>16.09.2018 5:17</td><td>Файл "MST"</td><td>11 КБ</td></tr>
<tr><td></td><td>16.09.2018 5:17</td><td>Архив WinRAR</td><td>379 686 КБ</td></tr>
<tr><td><div><svg class="i12" viewBox="0 0 12 12"><path d="M1 2.500h10v7H1z" fill="#e8f2fc" stroke="#99a"/><path d="M4 5h4v4H4z" fill="#1d61b0"/></svg>instmsi30</div></td><td>16.09.2018 5:16</td><td>Приложение</td><td>1 957 КБ</td></tr>
<tr class="sel"><td><div><svg class="i12 onec-red" viewBox="0 0 12 12"><circle cx="6" cy="6" r="5" fill="#f9cf3e"/><use href="#onec" x="1" y="3" width="10" height="6"/></svg>setup</div></td><td>16.09.2018 5:17</td><td>Приложение</td><td>536 КБ</td></tr>
<tr><td><div><svg class="i12" viewBox="0 0 12 12"><path d="M3 .5h5l2 2v9H3z" fill="#fff" stroke="#999"/><circle cx="4" cy="8" r="2" fill="none" stroke="#888"/></svg>Setup</div></td><td>16.09.2018 5:16</td><td>Параметры конф...</td><td>3 КБ</td></tr>
<tr><td><div><svg class="i12"><use href="#msi"/></svg>vc_redist.x86</div></td><td>16.09.2018 5:17</td><td>Приложение</td><td>14 120 КБ</td></tr>
</tbody></table>
</div>
<div class="ex-status d-flex align-items-center"><span>Элементов: 34</span><span>Выбран 1 элемент: 535 КБ</span></div>
</section>

<section class="setup-win position-absolute d-flex flex-column">
<div class="setup-title d-flex align-items-center"><svg class="i12"><use href="#msi"/></svg>1С:Предприятие 8<button class="ms-auto" aria-label="Закрыть"><svg width="9" height="9" viewBox="0 0 10 10"><use href="#xx"/></svg></button></div>
<div class="setup-body d-flex">
<div class="side-art d-flex align-items-end justify-content-center"><svg class="onec-red" width="42" height="20"><use href="#onec"/></svg></div>
<div class="setup-text"><h1>Программа установки завершена</h1>
<div>Программа установки успешно установила<br>1С:Предприятие 8. Нажмите кнопку "Готово" для выхода<br>из программы.</div>
<label class="readme d-flex align-items-center"><input type="checkbox">Открыть файл Readme</label></div>
</div>
<div class="setup-foot d-flex justify-content-end align-items-center flex-grow-1"><button disabled>&lt; Назад</button><button class="go">Готово</button><button disabled>Отмена</button></div>
</section>

<div class="tv-tail position-absolute d-flex align-items-center justify-content-around"><svg class="i10" viewBox="0 0 10 10"><path d="M.5.500h9v9h-9zM.5 3.500h9M.5 6.500h9M3.500.500v9M6.500.500v9" stroke="#aaa" fill="none"/></svg><svg width="8" height="8" viewBox="0 0 10 10"><path d="M1 4V1h3M1 1l3 3M6 1h3v3M9 1L6 4M1 6v3h3M1 9l3-3M9 6v3H6M9 9L6 6" stroke="#888" fill="none"/></svg><svg class="i10" viewBox="0 0 10 10"><path d="M0 8l5-5 5 5" stroke="#666" stroke-width="1.500" fill="none"/></svg></div>
<div class="tv-bar position-absolute d-flex align-items-center justify-content-between">
<button aria-label="Закрыть панель"><svg width="14" height="14" viewBox="0 0 10 10"><use href="#xx"/></svg></button>
<button><svg class="i16" viewBox="0 0 16 16"><circle cx="8" cy="8" r="6.500" fill="none" stroke="#5fa28a" stroke-width="2.500" stroke-dasharray="32 3"/><path d="M5.500 7h5M5.500 9h5" stroke="#999"/></svg>Главная</button>
<button><svg class="i16" viewBox="0 0 16 16"><path d="M6 1h7l-3 5h4L4 15l2.500-6.500H2z" fill="#f2b74d"/></svg>Действия<svg class="crt" width="6" height="5"><use href="#car"/></svg></button>
<button><svg class="i16" viewBox="0 0 16 16"><path d="M1.500 1.500h11v8h-11z" fill="#fff" stroke="#3d72b4" stroke-width="1.600"/><path d="M2 13.500h8M6 10v3" stroke="#3d72b4" stroke-width="1.600"/><path d="M15 6l-4 5-2 4 4-2 2-3z" fill="#555"/></svg>Просмотр<svg class="crt" width="6" height="5"><use href="#car"/></svg></button>
<button><svg class="i16" viewBox="0 0 16 16"><path d="M2 3c-2 6 3 12 9 12l2-3-3-2-2 1-3-4 1-2-2-3z" fill="#3d72b4"/><path d="M7.500 3.500h5v4h-3l-2 2zM10 1.500h5v4h-2" fill="#fff" stroke="#777"/></svg>Общение<svg class="crt" width="6" height="5"><use href="#car"/></svg></button>
<button><svg class="i16" viewBox="0 0 16 16"><path d="M1.500 1.500h6l3 3v9h-9z" fill="#fff" stroke="#777"/><path d="M6 9h2a1.700 1.700 0 1 1 3.200 0H14v2h1v2h-1v2H6z" fill="#5fa28a"/></svg>Файлы и дополнительные возможности<svg class="crt" width="6" height="5"><use href="#car"/></svg></button>
<button><svg class="i16" viewBox="0 0 16 16"><path d="M1.500 1.500h9v12h-9z" fill="#fff" stroke="#777"/><path d="M3 4.500h6M3 7h5M3 9.500h4" stroke="#999"/><path d="M14 3l2 2-7 8-3 1 1-3z" fill="#3d82c4"/></svg>Комментарий</button>
<button aria-label="Отзыв"><svg class="i12" viewBox="0 0 12 12"><circle cx="6" cy="6" r="6" fill="#f7c61b"/><path d="M2.500 6.500h7a3.500 3.500 0 0 1-7 0z" fill="#5c3b00"/><path d="M4.200 2.500v2M7.800 2.500v2" stroke="#5c3b00" stroke-width="1.200"/></svg></button>
</div>
<svg class="red-arrow position-absolute" viewBox="0 0 230 18"><path d="M8 8l218 5" stroke="#e20d0d" stroke-width="2"/><path d="M2 8l12-3v6z" fill="#e20d0d"/></svg>
<div class="watermark position-absolute"><div>Активация Windows</div>Чтобы активировать Windows, перейдите в раздел "Параметры".</div>
<svg class="side-grip position-absolute" viewBox="0 0 16 36"><path d="M3 0h13v36L0 26V3z" fill="#606060"/><use href="#tv" x="3" y="4" width="13" height="13"/></svg>
</main>
<script src="https://cdn.jsdelivr.net/npm/bootstrap@5.3.0/dist/js/bootstrap.bundle.min.js"></script>
</body>
</html>
